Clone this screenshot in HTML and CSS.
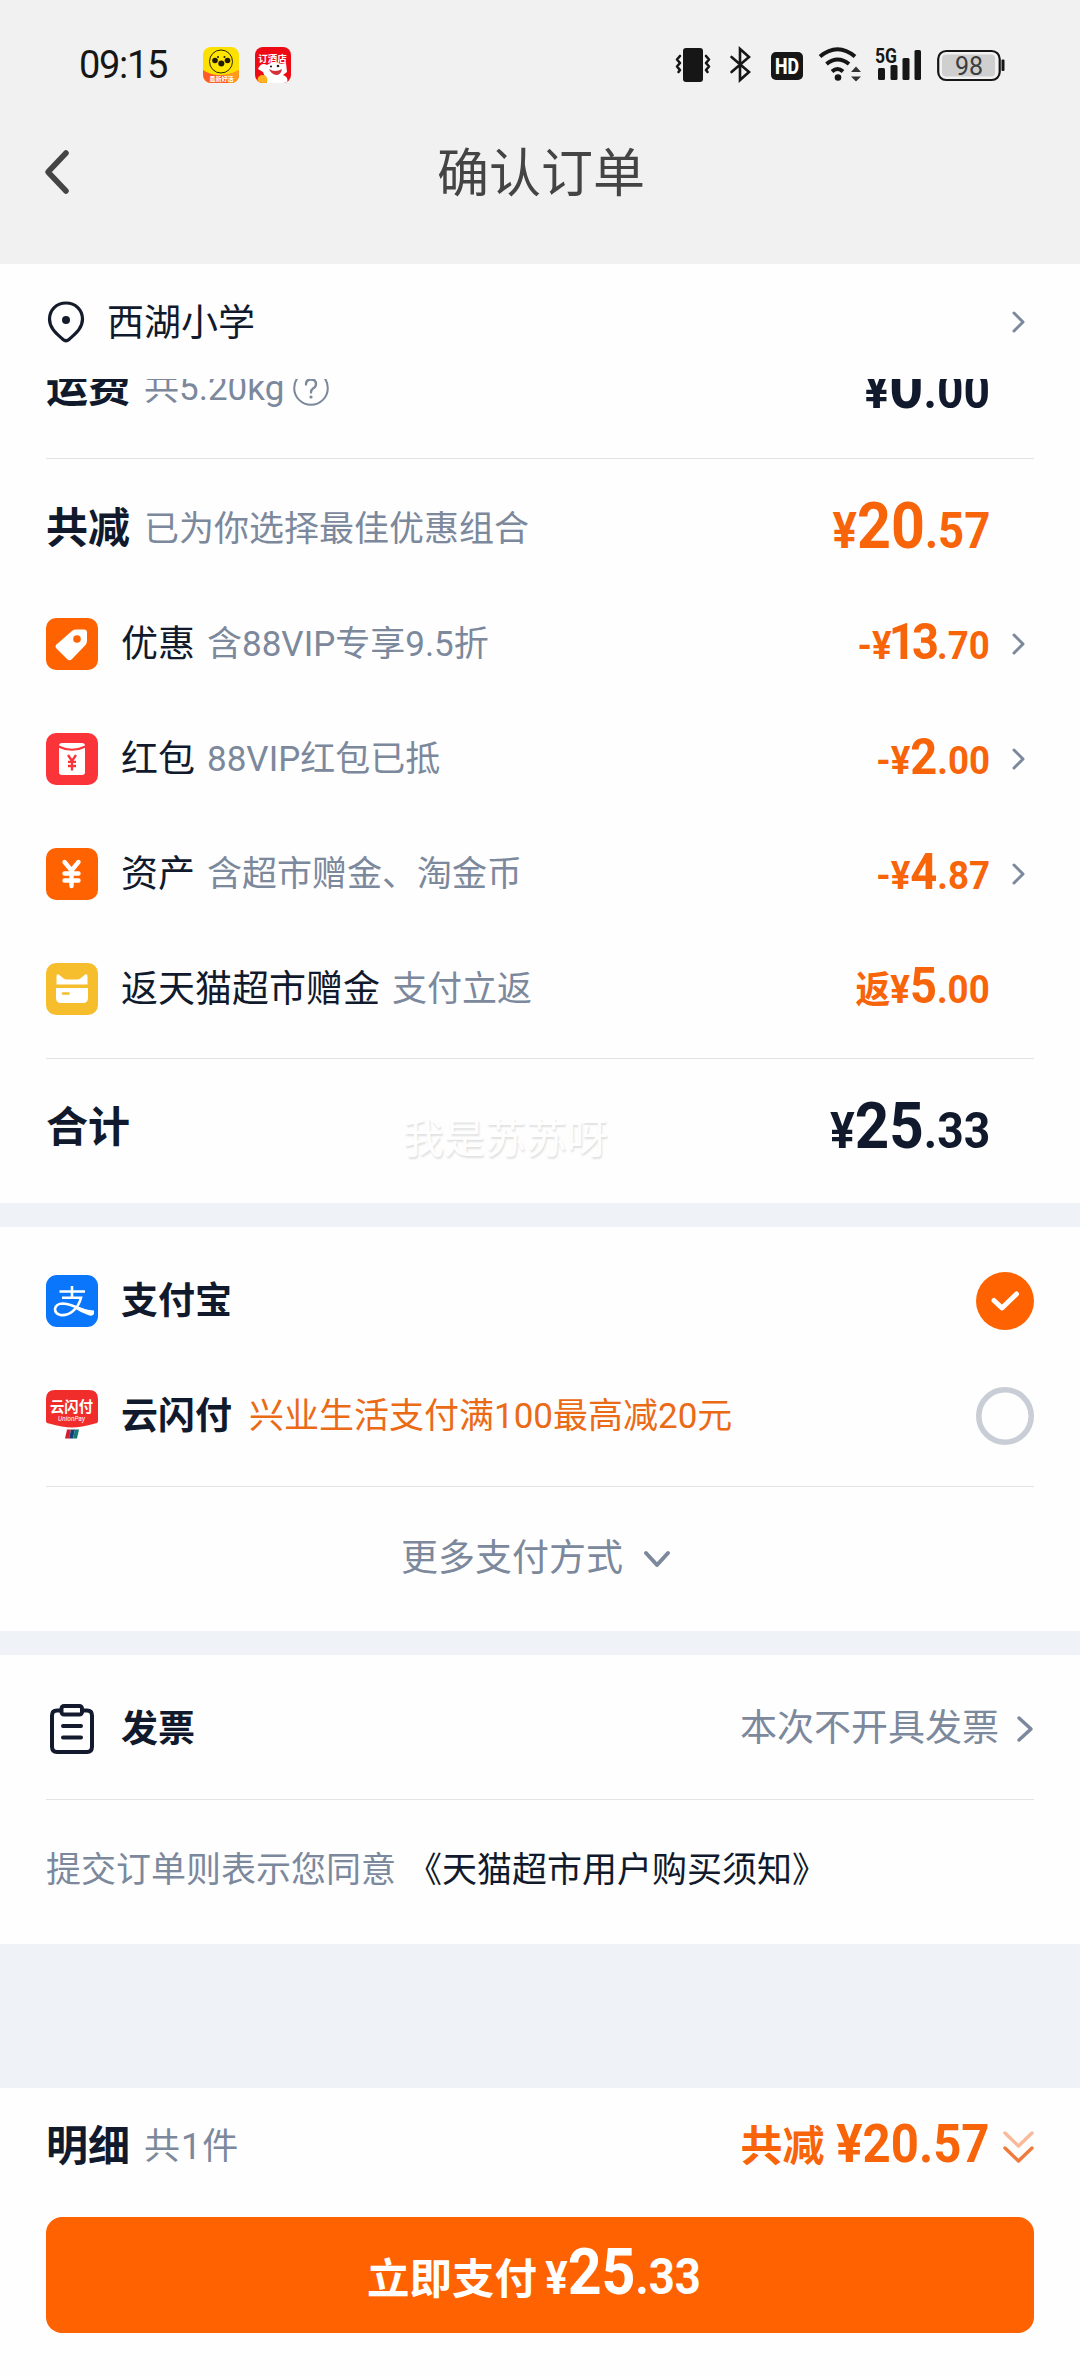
FILE: index.html
```html
<!DOCTYPE html>
<html lang="zh-CN">
<head>
<meta charset="utf-8">
<title>确认订单</title>
<link rel="stylesheet" href="styles.css">
</head>
<body>
<svg class="defs" width="0" height="0">
  <symbol id="chev" viewBox="0 0 44 24"><path d="M24 3L33 12L24 21" fill="none" stroke="#7c889c" stroke-width="3" stroke-linecap="round" stroke-linejoin="round"/></symbol>
</svg>
<header class="top">
  <div class="status">
    <span class="time">09:15</span>
    <svg class="app" width="36" height="36" viewBox="0 0 36 36">
      <defs><clipPath id="r1"><rect width="36" height="36" rx="8"/></clipPath></defs>
      <g clip-path="url(#r1)">
        <rect width="36" height="36" fill="#fbe000"/>
        <path d="M0 23Q8 29 20 28Q30 27 36 23V36H0Z" fill="#ff5a2a"/>
        <path d="M20 28Q30 27 36 23V36H26Z" fill="#ff9a1c"/>
        <circle cx="18" cy="14.500" r="11.500" fill="#ffe500" stroke="#2b2400" stroke-width="1"/>
        <circle cx="12" cy="13.500" r="2.800" fill="#221a00"/><circle cx="24.500" cy="13.500" r="2.800" fill="#221a00"/><circle cx="18.300" cy="16.500" r="3" fill="#221a00"/>
        <circle cx="15" cy="10" r="1" fill="#221a00"/><circle cx="21.500" cy="10" r="1" fill="#221a00"/>
        <text x="18.500" y="34" class="tiny" font-size="6" text-anchor="middle">最新好活</text>
      </g>
    </svg>
    <svg class="app second" width="36" height="36" viewBox="0 0 36 36">
      <defs><clipPath id="r2"><rect width="36" height="36" rx="8"/></clipPath></defs>
      <g clip-path="url(#r2)">
        <rect width="36" height="36" fill="#ee0a14"/>
        <path d="M3 22Q6 15 12 18Q18 13 26 17L31 16L32 25L28 28Q34 30 32 36H12Q10 30 8 25Z" fill="#fff"/>
        <path d="M14 22Q20 26 27 22Q26 28 21 28Q16 27 14 22Z" fill="#d5303a"/>
        <circle cx="16" cy="19.500" r="1.100" fill="#222"/><circle cx="23" cy="19" r="1.300" fill="#222"/>
        <circle cx="7.500" cy="33" r="5" fill="#ffb21e"/>
        <text x="17.500" y="15" class="tiny" font-size="9.500" text-anchor="middle">订酒店</text>
      </g>
    </svg>
    <svg class="sys" width="340" height="36" viewBox="0 0 340 36">
      <g fill="none" stroke="#161616" stroke-width="2.600" stroke-linejoin="round" stroke-linecap="round">
        <path d="M7 9L4 12.500L7 16L4 19.500L7 23L5.500 25M33 9L36 12.500L33 16L36 19.500L33 23L34.500 25"/>
        <path d="M58.500 10L76 25L67 33V2L76 10L58.500 25" stroke-linejoin="miter"/>
        <path d="M147 9.500Q164.500 -5 182 9.500M153.500 17Q164.500 8 176 17M159 24.500Q164.500 19.500 170 24.500" stroke-width="4" stroke-linecap="butt"/>
      </g>
      <g fill="#161616">
        <rect x="10" y="1" width="20" height="34" rx="3"/>
        <rect x="98" y="5" width="32" height="28" rx="5"/>
        <circle cx="165" cy="30.500" r="3.300"/>
        <path d="M178 25L183 19.500L188 25ZM178 29.500H188L183 34.500Z" fill="#333"/>
        <rect x="205" y="21" width="7" height="12" rx="1.500"/><rect x="217.500" y="18" width="7" height="15" rx="1.500"/><rect x="229.500" y="11" width="7" height="22" rx="1.500"/><rect x="241.500" y="3" width="6.500" height="30" rx="1.500"/>
        <rect x="328.500" y="12.500" width="3" height="11.500" rx="1"/>
      </g>
      <rect x="265.200" y="4" width="61.500" height="29" rx="8" fill="none" stroke="#161616" stroke-width="2.200"/>
      <rect x="269" y="7.500" width="53" height="22" rx="4" fill="#cfcfcf"/>
      <text x="114" y="27" font-size="22" font-weight="800" fill="#fff" text-anchor="middle" textLength="24" lengthAdjust="spacingAndGlyphs">HD</text>
      <text x="202" y="16" font-size="20.500" font-weight="700" fill="#161616" textLength="22" lengthAdjust="spacingAndGlyphs">5G</text>
      <text x="296" y="27.500" font-size="25" fill="#3c3c3c" text-anchor="middle" textLength="28">98</text>
    </svg>
  </div>
  <div class="titlebar">
    <svg class="back" width="26" height="46" viewBox="0 0 26 46"><path d="M22 4L4 23L22 42" fill="none" stroke="#444" stroke-width="5.500" stroke-linecap="round" stroke-linejoin="round"/></svg>
    <h1 class="title">确认订单</h1>
  </div>
</header>

<section class="address">
  <svg class="pin" width="38" height="42" viewBox="0 0 38 42"><path d="M19 2C9.500 2 2.500 9 2.500 18C2.500 27.500 10 33 16 38.500Q19 41 22 38.500C28 33 35.500 27.500 35.500 18C35.500 9 28.500 2 19 2Z" fill="none" stroke="#141c2c" stroke-width="3.200"/><circle cx="19" cy="19" r="4" fill="#141c2c"/></svg>
  <span class="label">西湖小学</span>
  <svg class="chev"><use href="#chev"/></svg>
</section>

<main>
  <section class="fees">
    <div class="row shipping">
      <span class="head">运费</span><span class="note">共5.20kg</span>
      <svg class="help" width="36" height="36" viewBox="0 0 36 36"><circle cx="18" cy="18" r="16.800" fill="none" stroke="#7c889c" stroke-width="2"/><path d="M13 14.500Q13 9.500 18 9.500Q23 9.500 23 14Q23 17 20 18.500Q18 19.800 18 22.500" fill="none" stroke="#7c889c" stroke-width="2.300" stroke-linecap="round"/><circle cx="18" cy="27" r="1.600" fill="#7c889c"/></svg>
      <span class="price dark"><i>¥</i><b>0</b><i>.00</i></span>
    </div>
    <div class="group">
      <div class="row">
        <span class="head">共减</span><span class="note">已为你选择最佳优惠组合</span>
        <span class="price"><i>¥</i><b>20</b><i>.57</i></span>
      </div>
      <div class="row">
        <svg class="icon" viewBox="0 0 52 52"><rect width="52" height="52" rx="10" fill="#ff6200"/><path d="M26.500 12.500Q28 11.500 30 11.500H38Q41 11.500 41 14.500V22.500Q41 25 39.500 27L26 41Q23.500 43.500 21 41L10.500 30.500Q8.500 28.500 10.500 26.500Z" fill="#fff"/><circle cx="31" cy="21" r="3.800" fill="#ff6200"/></svg>
        <span class="label">优惠</span><span class="note">含88VIP专享9.5折</span>
        <span class="price small"><i>-¥</i><b class="tight">13</b><i>.70</i></span><svg class="chev"><use href="#chev"/></svg>
      </div>
      <div class="row">
        <svg class="icon" viewBox="0 0 52 52"><rect width="52" height="52" rx="10" fill="#fb343a"/><path d="M13 13Q13 10 16 10H36Q39 10 39 13V39Q39 42 36 42H16Q13 42 13 39Z" fill="#fff"/><path d="M12.500 13.500Q26 20 39.500 13.500" fill="none" stroke="#fb343a" stroke-width="2"/><path d="M22 22L26 28L30 22M26 28V37.500M22 28.800H30M22 33H30" fill="none" stroke="#fb343a" stroke-width="2.300"/></svg>
        <span class="label">红包</span><span class="note">88VIP红包已抵</span>
        <span class="price small"><i>-¥</i><b>2</b><i>.00</i></span><svg class="chev"><use href="#chev"/></svg>
      </div>
      <div class="row">
        <svg class="icon" viewBox="0 0 52 52"><rect width="52" height="52" rx="10" fill="#ff6200"/><path d="M18.500 14L25.500 22.500L32.500 14M25.500 22.500V38M18.500 25.500H32.500M18.500 32.500H32.500" fill="none" stroke="#fff" stroke-width="4.400" stroke-linecap="round"/></svg>
        <span class="label">资产</span><span class="note">含超市赠金、淘金币</span>
        <span class="price small"><i>-¥</i><b>4</b><i>.87</i></span><svg class="chev"><use href="#chev"/></svg>
      </div>
      <div class="row">
        <svg class="icon" viewBox="0 0 52 52"><rect width="52" height="52" rx="10" fill="#f6bd2c"/><path d="M10.500 21.500V13.500Q10.500 10 13.500 12L17 15Q19 16.500 21 16.500H31Q33 16.500 35 15L38.500 12Q41.500 10 41.500 13.500V21.500ZM10 25H42V35Q42 40 37 40H15Q10 40 10 35Z" fill="#fff"/><path d="M17 30.500H22.500" stroke="#f6bd2c" stroke-width="2.600" stroke-linecap="round"/></svg>
        <span class="label">返天猫超市赠金</span><span class="note">支付立返</span>
        <span class="price small"><em>返</em><i>¥</i><b>5</b><i>.00</i></span>
      </div>
    </div>
    <div class="row total">
      <span class="head">合计</span>
      <span class="price dark"><i>¥</i><b>25</b><i>.33</i></span>
      <span class="mark">我是苏苏呀</span>
    </div>
  </section>

  <section class="pay">
    <div class="group">
      <div class="row">
        <svg class="icon" viewBox="0 0 52 52"><rect width="52" height="52" rx="11" fill="#0a76fb"/><path d="M13.500 16.500H39M26 11V22.500M16 22.800H35Q33 31 27 36Q21 41 14.500 40Q9 38.500 9 34Q10 28.500 17 28.500Q24 29 33 33.500Q40 36.500 46.500 37.500" fill="none" stroke="#fff" stroke-width="2.600"/><path d="M31 31Q39 35 48 35.500V39Q46 42 42 40Q34 37 28 33Z" fill="#fff"/></svg>
        <span class="label strong">支付宝</span>
        <svg class="radio" viewBox="0 0 58 58"><circle cx="29" cy="29" r="29" fill="#ff6200"/><path d="M18 28.500L26 36L40.500 22" fill="none" stroke="#fff" stroke-width="5" stroke-linecap="round" stroke-linejoin="round"/></svg>
      </div>
      <div class="row">
        <svg class="icon" viewBox="0 0 52 52"><path d="M0 9Q0 0 9 0H43Q52 0 52 9V31Q52 33 49 33.500Q35 37.500 26 37.500Q17 37.500 3 33.500Q0 33 0 31Z" fill="#f02d2a"/><path d="M21 39.500H25L23 48.500H19Z" fill="#d02030"/><path d="M25 39.500H29L27 48.500H23Z" fill="#1c3e78"/><path d="M29 39.500H33L31 48.500H27Z" fill="#127a78"/><text x="25.500" y="21.500" class="tiny" font-size="15" text-anchor="middle" textLength="43" lengthAdjust="spacingAndGlyphs">云闪付</text><text x="25.500" y="30.500" font-size="6.500" font-style="italic" fill="#fff" text-anchor="middle" textLength="27">UnionPay</text></svg>
        <span class="label strong">云闪付</span><span class="promo">兴业生活支付满100最高减20元</span>
        <svg class="radio" viewBox="0 0 58 58"><circle cx="29" cy="29" r="26.200" fill="none" stroke="#c9cdd6" stroke-width="5.600"/></svg>
      </div>
    </div>
    <div class="more">
      <span>更多支付方式</span>
      <svg width="28" height="18" viewBox="0 0 28 18"><path d="M3 3L14 15L25 3" fill="none" stroke="#7c889c" stroke-width="4" stroke-linecap="round" stroke-linejoin="round"/></svg>
    </div>
  </section>

  <section class="invoice">
    <div class="row">
      <svg class="icon" viewBox="0 0 52 52"><g fill="none" stroke="#141a2e" stroke-width="4" stroke-linejoin="round" stroke-linecap="round"><path d="M15 7.500H11Q6 7.500 6 12.500V43.500Q6 49 11 49H41Q46 49 46 43.500V12.500Q46 7.500 41 7.500H37"/><rect x="15.500" y="3" width="20.500" height="8.500" rx="2.500"/><path d="M17 23H35M17 34.500H35"/></g></svg>
      <span class="label strong">发票</span>
      <span class="choice">本次不开具发票</span>
      <svg class="chev2" width="18" height="28" viewBox="0 0 18 28"><path d="M3 3L15 14L3 25" fill="none" stroke="#7c889c" stroke-width="3.500" stroke-linecap="round" stroke-linejoin="round"/></svg>
    </div>
    <div class="terms"><span>提交订单则表示您同意</span><a>《天猫超市用户购买须知》</a></div>
  </section>
</main>

<footer class="checkout">
  <div class="detail">
    <span class="head">明细</span><span class="note count">共1件</span>
    <span class="saved">共减</span><span class="price even">¥20.57</span>
    <svg class="dbl" width="32" height="34" viewBox="0 0 32 34"><g fill="none" stroke-width="3.400" stroke-linecap="round" stroke-linejoin="round"><path d="M3 3L16.500 16L30 3" stroke="#fab99a"/><path d="M3 18L16.500 31L30 18" stroke="#ef7a3c"/></g></svg>
  </div>
  <button class="submit"><span class="go">立即支付</span><span class="price white"><i>¥</i><b>25</b><i>.33</i></span></button>
</footer>
</body>
</html>
```
FILE: styles.css
```css
* { box-sizing: border-box; }
body {
  margin: 0;
  width: 1080px;
  background: #eff3f7;
  color: #111a2c;
  font-family: Roboto, "Noto Sans CJK SC", sans-serif;
  font-size: 37px;
  line-height: 52px;
  white-space: nowrap;
}
svg { display: block; flex: none; overflow: visible; }
.defs { position: absolute; }
.tiny { fill: #fff; font-family: "Noto Sans CJK SC", sans-serif; font-weight: 700; }

.top { height: 264px; background: #f1f1f1; }
.status { display: flex; align-items: center; height: 130px; padding-left: 79px; }
.time { width: 124px; font-size: 38px; letter-spacing: -1.3px; color: #161616; }
.second { margin-left: 16px; }
.sys { margin-left: 382px; }
.titlebar { display: flex; align-items: center; height: 84px; padding-left: 44px; }
.title { margin: 0 0 0 367px; padding-top: 6px; font-size: 52px; font-weight: 400; color: #444; line-height: 70px; }

.address { display: flex; align-items: center; height: 115px; padding: 0 46px 0 47px; background: #fefefe; }
.address .label { margin-left: 22px; padding-top: 4px; }
.chev { width: 44px; height: 24px; }
.address .chev { margin-left: auto; }

.fees { height: 824px; padding: 0 46px; overflow: hidden; background: #fefefe; }
.row { display: flex; align-items: center; height: 115px; }
.row .label, .row .note, .promo { padding-top: 2px; }
.shipping { height: 140px; margin-top: -61px; }
.group { border-top: 1px solid #e1e4e7; border-bottom: 1px solid #e1e4e7; padding: 12px 0; }
.head { font-size: 42px; font-weight: 700; }
.note { margin-left: 14px; font-size: 35px; color: #7c889c; }
.label + .note { margin-left: 12px; }
.help { margin-left: 9px; }
.icon { width: 52px; height: 52px; }
.icon + .label { margin-left: 23px; }
.strong { font-weight: 600; }
.promo { margin-left: 17px; font-size: 35px; color: #ea6a16; }
.radio { width: 58px; height: 58px; margin-left: auto; }

.price { display: flex; align-items: baseline; margin-left: auto; margin-right: 44px; color: #f76409; font-weight: 700; line-height: 70px; transform: scaleX(.91); transform-origin: right; }
.price i, .price em { font-style: normal; font-size: 50px; font-weight: inherit; }
.price b { font-size: 65px; font-weight: inherit; }
.price.dark { color: #111a2c; transform: scaleX(.925); }
.price.small { transform: scaleX(.94); }
.price.small i { font-size: 39px; }
.price.small b { font-size: 50px; }
.price.small b.tight { letter-spacing: -4px; margin: 0 2px 0 -3px; }
.price.small em { font-size: 37px; }
.price:has(+ .chev) { margin-right: 0; }
.total { position: relative; height: 138px; }
.mark { position: absolute; left: 357px; top: 54px; font-size: 41px; color: #fefefe; text-shadow: 1px 2px 2px #e0e0e0; }

.pay { height: 404px; margin-top: 24px; padding: 0 46px; background: #fefefe; }
.pay .group { border-top: 0; padding: 16px 0 13px; }
.more { display: flex; align-items: center; height: 144px; padding-left: 355px; color: #7c889c; }
.more svg { margin-left: 20px; }

.invoice { margin-top: 24px; padding: 0 46px; height: 289px; background: #fefefe; }
.invoice .row { height: 145px; border-bottom: 1px solid #e1e4e7; padding-top: 3px; }
.choice { margin-left: auto; color: #7c889c; }
.chev2 { margin-left: 17px; }
.terms { display: flex; gap: 11px; align-items: center; height: 142px; font-size: 35px; color: #7c889c; }
.terms a { color: #111a2c; }

.checkout { height: 288px; margin-top: 144px; padding: 0 46px; background: #fefefe; }
.detail { display: flex; align-items: center; height: 129px; padding-bottom: 11px; }
.count { font-size: 36px; letter-spacing: 1px; }
.saved { margin-left: auto; font-size: 42px; font-weight: 600; color: #f76409; }
.price.even { margin: -6px 0 0 -3px; font-size: 54px; }
.dbl { margin-left: 12px; }
.submit { display: flex; align-items: center; justify-content: center; width: 988px; height: 116px; padding: 0 0 0 4px; border: 0; border-radius: 16px; background: #ff6200; color: #fff; font-family: inherit; }
.go { font-size: 42.5px; font-weight: 600; }
.price.white { margin: 0; color: #fff; transform-origin: left; padding-left: 9px; }
.price.white i:first-child { font-size: 46px; }
```
